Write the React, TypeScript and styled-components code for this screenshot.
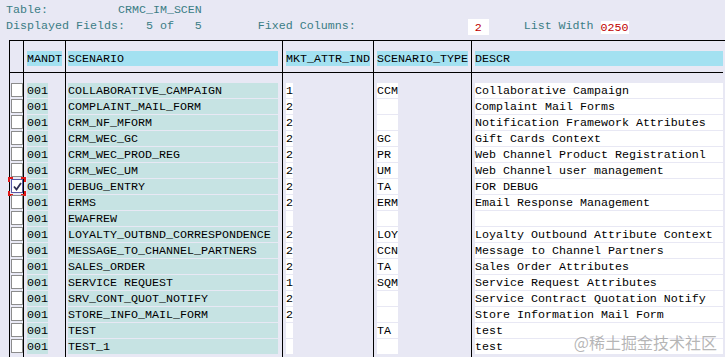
import React, { FC } from 'react';
import styled, { createGlobalStyle } from 'styled-components';

const CH = 7;

const GlobalStyle = createGlobalStyle`
  *, *::before, *::after {
    box-sizing: border-box;
  }

  html,
  body {
    margin: 0;
    padding: 0;
    background: #e8e8f4;
    overflow: hidden;
  }

  body {
    font-family: 'Liberation Mono', 'DejaVu Sans Mono', monospace;
    font-size: 11.667px;
    color: #000;
  }
`;

const Screen = styled.div`
  position: relative;
  width: 725px;
  height: 357px;
  overflow: hidden;
  background: #e8e8f4;
`;

const Info = styled.div`
  padding: 3px 0 0 6px;
  color: #3b7d85;
`;

const InfoLine = styled.div`
  display: flex;
  align-items: flex-end;
  height: 16px;
  line-height: 17px;
  white-space: pre;
`;

const Field = styled.span<{ $chars: number; $h: number; $pt: number }>`
  display: flex;
  align-items: center;
  justify-content: center;
  width: ${(p) => p.$chars * CH}px;
  height: ${(p) => p.$h}px;
  padding-top: ${(p) => p.$pt}px;
  margin-bottom: ${(p) => (p.$h < 16 ? 1 : 0)}px;
  line-height: 12px;
  background: #fff;
  color: #c00000;
`;

const Table = styled.div`
  display: flex;
  margin: 5px 0 0 9px;
  border-top: 1px solid #000;
  border-left: 1px solid #000;
  height: 322px;
`;

const Column = styled.div<{ $width?: number; $last?: boolean }>`
  display: flex;
  flex-direction: column;
  ${(p) => (p.$width ? `width: ${p.$width}px;` : 'flex: 1; padding-right: 2px;')}
  border-right: ${(p) => (p.$last ? 'none' : '1px solid #000')};
`;

const HeadCell = styled.div<{ $pad: number }>`
  display: flex;
  height: 32px;
  padding: 10px 0 0 ${(p) => p.$pad}px;
  border-bottom: 1px solid #000;
`;

const HeadLabel = styled.span<{ $chars?: number }>`
  display: block;
  height: 15px;
  padding-top: 2px;
  line-height: 13px;
  white-space: pre;
  background: #a3e1f1;
  ${(p) => (p.$chars ? `width: ${p.$chars * CH}px;` : 'flex: 1;')}
`;

const ColumnBody = styled.div`
  padding-top: 10px;
`;

const Slot = styled.div<{ $pad: number }>`
  position: relative;
  display: flex;
  height: 16px;
  padding-left: ${(p) => p.$pad}px;
`;

const Value = styled.span<{ $chars?: number; $key?: boolean }>`
  display: block;
  height: 15px;
  padding-top: 2px;
  line-height: 13px;
  white-space: pre;
  background: ${(p) => (p.$key ? '#c6e3e3' : '#fff')};
  ${(p) => (p.$chars ? `width: ${p.$chars * CH}px;` : 'flex: 1;')}
`;

const Box = styled.span<{ $checked?: boolean }>`
  position: relative;
  display: block;
  width: 12px;
  height: 14px;
  margin-left: 1px;
  background: #fff;
  border: 1px solid ${(p) => (p.$checked ? '#5858a4' : '#8c8c8c')};
`;

const Focus = styled.svg`
  position: absolute;
  left: -4px;
  top: -3px;
  width: 18px;
  height: 19px;
  overflow: visible;
`;

const Mark = styled.svg`
  position: absolute;
  left: 1px;
  top: 2px;
  width: 9px;
  height: 9px;
`;

const Watermark = styled.div`
  position: absolute;
  right: 8px;
  bottom: 6px;
  font-family: 'Noto Sans CJK SC', 'Noto Sans', sans-serif;
  font-size: 16px;
  line-height: 18px;
  color: rgba(150, 150, 150, 0.7);
  pointer-events: none;
`;

type Row = {
  scenario: string;
  attr: string;
  type: string;
  descr: string;
  checked?: boolean;
};

const rows: Row[] = [
  { scenario: 'COLLABORATIVE_CAMPAIGN', attr: '1', type: 'CCM', descr: 'Collaborative Campaign' },
  { scenario: 'COMPLAINT_MAIL_FORM', attr: '2', type: '', descr: 'Complaint Mail Forms' },
  { scenario: 'CRM_NF_MFORM', attr: '2', type: '', descr: 'Notification Framework Attributes' },
  { scenario: 'CRM_WEC_GC', attr: '2', type: 'GC', descr: 'Gift Cards Context' },
  { scenario: 'CRM_WEC_PROD_REG', attr: '2', type: 'PR', descr: 'Web Channel Product Registrationl' },
  { scenario: 'CRM_WEC_UM', attr: '2', type: 'UM', descr: 'Web Channel user management' },
  { scenario: 'DEBUG_ENTRY', attr: '2', type: 'TA', descr: 'FOR DEBUG', checked: true },
  { scenario: 'ERMS', attr: '2', type: 'ERM', descr: 'Email Response Management' },
  { scenario: 'EWAFREW', attr: '', type: '', descr: '' },
  { scenario: 'LOYALTY_OUTBND_CORRESPONDENCE', attr: '2', type: 'LOY', descr: 'Loyalty Outbound Attribute Context' },
  { scenario: 'MESSAGE_TO_CHANNEL_PARTNERS', attr: '2', type: 'CCN', descr: 'Message to Channel Partners' },
  { scenario: 'SALES_ORDER', attr: '2', type: 'TA', descr: 'Sales Order Attributes' },
  { scenario: 'SERVICE REQUEST', attr: '1', type: 'SQM', descr: 'Service Request Attributes' },
  { scenario: 'SRV_CONT_QUOT_NOTIFY', attr: '2', type: '', descr: 'Service Contract Quotation Notify' },
  { scenario: 'STORE_INFO_MAIL_FORM', attr: '2', type: '', descr: 'Store Information Mail Form' },
  { scenario: 'TEST', attr: '', type: 'TA', descr: 'test' },
  { scenario: 'TEST_1', attr: '', type: '', descr: 'test' },
];

const CheckBox: FC<{ checked?: boolean }> = ({ checked }) => (
  <Box $checked={checked}>
    {checked && (
      <>
        <Mark viewBox="0 0 9 9">
          <polyline points="1,4.5 3.5,7.5 8,1" fill="none" stroke="#2e2e52" strokeWidth="1.8" />
        </Mark>
        <Focus viewBox="0 0 18 19">
          <path
            d="M1 5V1H5M13 1H17V5M17 14V18H13M5 18H1V14"
            fill="none"
            stroke="#e01818"
            strokeWidth="2"
          />
        </Focus>
      </>
    )}
  </Box>
);

const App: FC = () => {
  return (
    <Screen>
      <GlobalStyle />
      <Info>
        <InfoLine>{'Table:          CRMC_IM_SCEN'}</InfoLine>
        <InfoLine>
          {'Displayed Fields:   5 of   5        Fixed Columns:                '}
          <Field $chars={3} $h={16} $pt={1}>2</Field>
          {'     List Width '}
          <Field $chars={4} $h={13} $pt={0}>0250</Field>
        </InfoLine>
      </Info>

      <Table>
        <Column $width={14}>
          <HeadCell $pad={0} />
          <ColumnBody>
            {rows.map((r) => (
              <Slot key={r.scenario} $pad={0}>
                <CheckBox checked={r.checked} />
              </Slot>
            ))}
          </ColumnBody>
        </Column>

        <Column $width={42}>
          <HeadCell $pad={3}>
            <HeadLabel $chars={5}>MANDT</HeadLabel>
          </HeadCell>
          <ColumnBody>
            {rows.map((r) => (
              <Slot key={r.scenario} $pad={3}>
                <Value $chars={3} $key>001</Value>
              </Slot>
            ))}
          </ColumnBody>
        </Column>

        <Column $width={217}>
          <HeadCell $pad={2}>
            <HeadLabel $chars={30}>SCENARIO</HeadLabel>
          </HeadCell>
          <ColumnBody>
            {rows.map((r) => (
              <Slot key={r.scenario} $pad={2}>
                <Value $chars={30} $key>{r.scenario}</Value>
              </Slot>
            ))}
          </ColumnBody>
        </Column>

        <Column $width={91}>
          <HeadCell $pad={3}>
            <HeadLabel $chars={12}>MKT_ATTR_IND</HeadLabel>
          </HeadCell>
          <ColumnBody>
            {rows.map((r) => (
              <Slot key={r.scenario} $pad={3}>
                <Value $chars={1}>{r.attr}</Value>
              </Slot>
            ))}
          </ColumnBody>
        </Column>

        <Column $width={98}>
          <HeadCell $pad={3}>
            <HeadLabel $chars={13}>SCENARIO_TYPE</HeadLabel>
          </HeadCell>
          <ColumnBody>
            {rows.map((r) => (
              <Slot key={r.scenario} $pad={3}>
                <Value $chars={3}>{r.type}</Value>
              </Slot>
            ))}
          </ColumnBody>
        </Column>

        <Column $last>
          <HeadCell $pad={3}>
            <HeadLabel>DESCR</HeadLabel>
          </HeadCell>
          <ColumnBody>
            {rows.map((r) => (
              <Slot key={r.scenario} $pad={3}>
                <Value>{r.descr}</Value>
              </Slot>
            ))}
          </ColumnBody>
        </Column>
      </Table>

      <Watermark>@稀土掘金技术社区</Watermark>
    </Screen>
  );
};

export default App;
